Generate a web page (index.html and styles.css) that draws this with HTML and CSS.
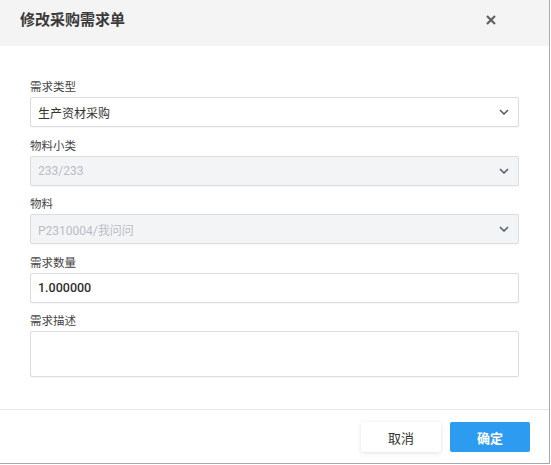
FILE: index.html
```html
<!DOCTYPE html>
<html lang="zh-CN">
<head>
<meta charset="utf-8">
<title>修改采购需求单</title>
<link rel="stylesheet" href="styles.css">
</head>
<body>
<div class="dialog">
  <div class="dialog-header">
    <span class="dialog-title">修改采购需求单</span>
    <span class="dialog-close">
      <svg width="10" height="10" viewBox="0 0 10 10"><path d="M1 1 L9 9 M9 1 L1 9" stroke="#606060" stroke-width="2.2" stroke-linecap="butt" fill="none"/></svg>
    </span>
  </div>
  <div class="dialog-body">
    <div class="field">
      <div class="field-label">需求类型</div>
      <div class="control select">
        <span class="value">生产资材采购</span>
        <svg class="chevron" width="10" height="6" viewBox="0 0 10 6"><path d="M1 1 L5 5 L9 1" stroke="#4f5b6b" stroke-width="1.5" fill="none"/></svg>
      </div>
    </div>
    <div class="field">
      <div class="field-label">物料小类</div>
      <div class="control select disabled">
        <span class="value">233/233</span>
        <svg class="chevron" width="10" height="6" viewBox="0 0 10 6"><path d="M1 1 L5 5 L9 1" stroke="#4f5b6b" stroke-width="1.5" fill="none"/></svg>
      </div>
    </div>
    <div class="field">
      <div class="field-label">物料</div>
      <div class="control select disabled">
        <span class="value">P2310004/我问问</span>
        <svg class="chevron" width="10" height="6" viewBox="0 0 10 6"><path d="M1 1 L5 5 L9 1" stroke="#4f5b6b" stroke-width="1.5" fill="none"/></svg>
      </div>
    </div>
    <div class="field">
      <div class="field-label">需求数量</div>
      <div class="control input"><span class="value strong">1.000000</span></div>
    </div>
    <div class="field">
      <div class="field-label">需求描述</div>
      <div class="control textarea"></div>
    </div>
  </div>
  <div class="dialog-footer">
    <button class="btn btn-cancel">取消</button>
    <button class="btn btn-primary">确定</button>
  </div>
</div>
</body>
</html>
```
FILE: styles.css
```css
* { box-sizing: border-box; }
html, body { margin: 0; padding: 0; background: #ffffff; }
body {
  font-family: Roboto, "Noto Sans CJK SC", sans-serif;
  color: #333;
  width: 551px;
  height: 465px;
  overflow: hidden;
}
.dialog {
  width: 550px;
  height: 464px;
  background: #fff;
  border-right: 1px solid #a9a9a9;
  border-bottom: 1px solid #a9a9a9;
  display: flex;
  flex-direction: column;
}
.dialog-header {
  height: 46px;
  flex: none;
  background: #f4f4f4;
  display: flex;
  align-items: center;
  justify-content: space-between;
  padding: 0 53px 0 20px;
}
.dialog-title {
  font-size: 15px;
  font-weight: 700;
  color: #3a3a3a;
  line-height: 20px;
  margin-top: -6px;
}
.dialog-close {
  display: flex;
  margin-top: -6px;
}
.dialog-body {
  padding: 31px 30px 0 30px;
  flex: none;
}
.field { margin-bottom: 8.5px; }
.field-label {
  font-size: 11.5px;
  line-height: 20px;
  color: #444;
}
.control {
  height: 30px;
  border: 1px solid #dcdde1;
  border-radius: 2px;
  background: #fff;
  display: flex;
  align-items: center;
  padding: 0 9px 0 7px;
  font-size: 12px;
  box-shadow: 0 1px 0 rgba(0,0,0,0.03);
}
.select { justify-content: space-between; }
.disabled { background: #f3f4f6; }
.disabled .value { color: #b9bdc6; }
.value { color: #333; }
.strong { font-weight: 500; color: #2f2f2f; font-size: 12.5px; }
.textarea { height: 46px; }
.dialog-footer {
  margin-top: 23.5px;
  border-top: 1px solid #e8e8e8;
  padding: 12px 19px 0 0;
  display: flex;
  justify-content: flex-end;
  gap: 9px;
}
.btn {
  width: 80px;
  height: 30px;
  border: none;
  border-radius: 2px;
  font-family: Roboto, "Noto Sans CJK SC", sans-serif;
  font-size: 13px;
  cursor: pointer;
}
.btn-cancel {
  background: #fff;
  color: #333;
  box-shadow: 0 1px 4px rgba(0,0,0,0.12);
}
.btn-primary {
  background: #2d9bf0;
  color: #fff;
  font-weight: 700;
}
```
